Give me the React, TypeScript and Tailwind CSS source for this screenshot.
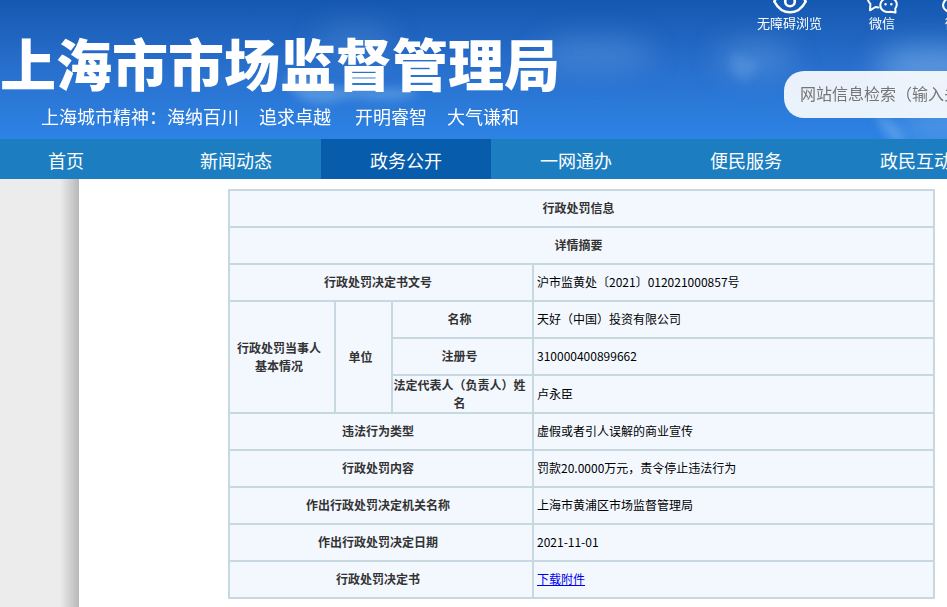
import type { ReactNode } from "react";

const navItems = ["首页", "新闻动态", "政务公开", "一网通办", "便民服务", "政民互动"];

function Th({
  children,
  colSpan,
  rowSpan,
  multiline = false,
}: {
  children: ReactNode;
  colSpan?: number;
  rowSpan?: number;
  multiline?: boolean;
}) {
  return (
    <th
      colSpan={colSpan}
      rowSpan={rowSpan}
      className={`h-[37px] border-2 border-[#c7d8e1] pr-[6px] pl-0 text-center font-bold text-[#333] ${multiline ? "pb-0" : "pb-px"}`}
    >
      {children}
    </th>
  );
}

function Td({ children }: { children: ReactNode }) {
  return <td className="h-[37px] border-2 border-[#c7d8e1] pb-px pl-[3px] text-black">{children}</td>;
}

function EyeIcon() {
  return (
    <svg viewBox="0 0 34 32" className="h-8 w-[34px]" fill="none" stroke="white" strokeWidth="2.6">
      <path d="M1.300 15.500C5 8 11 4.500 17 4.500s12 3.500 15.700 11C29 22.500 23 26.300 17 26.300S5 22.500 1.300 15.500Z" />
      <circle cx="17" cy="15.500" r="4.800" />
    </svg>
  );
}

function WechatIcon() {
  return (
    <svg viewBox="0 0 32 32" className="size-8" fill="none" stroke="white" strokeWidth="2" strokeLinecap="round" strokeLinejoin="round">
      <path d="M12.500 21.500 9.500 21 4 24.300l.4-6.300C-1 12 2 4 12 3.500c6 0 10 3.500 11 8" />
      <path d="M29.300 22.500c2.800-3.800 1.700-9.500-5-10.500-6-.5-10 3-10 7 0 5 4.500 7.800 10 6.800l5.200.8Z" />
      <path d="M19.500 18.200h.1M25.300 18.200h.1" strokeWidth="2.400" />
    </svg>
  );
}

function WeiboIcon() {
  return (
    <svg viewBox="0 0 32 32" className="size-8" fill="none" stroke="white" strokeWidth="2">
      <ellipse cx="12.500" cy="19" rx="11.500" ry="8" />
      <circle cx="12" cy="19" r="3.500" />
      <path d="M21 5c6-1 9 4 8 9" />
    </svg>
  );
}

function Clouds() {
  return (
    <svg className="absolute inset-0 h-full w-full" viewBox="0 0 947 139" preserveAspectRatio="none" aria-hidden="true">
      <defs>
        <filter id="haze" x="-60%" y="-100%" width="220%" height="300%">
          <feGaussianBlur stdDeviation="14" />
        </filter>
        <filter id="wisp" x="-50%" y="-50%" width="200%" height="200%">
          <feGaussianBlur stdDeviation="5" />
        </filter>
      </defs>
      <g fill="#8fc0f2" filter="url(#haze)">
        <ellipse cx="355" cy="40" rx="40" ry="16" opacity=".2" />
        <ellipse cx="595" cy="54" rx="60" ry="16" opacity=".26" />
        <ellipse cx="755" cy="58" rx="40" ry="18" opacity=".26" />
        <ellipse cx="930" cy="66" rx="55" ry="20" opacity=".5" />
        <ellipse cx="940" cy="125" rx="42" ry="14" opacity=".4" />
      </g>
      <g fill="#8fc0f2" filter="url(#wisp)">
        <path d="M284 80c20-8 30 6 60 8s50-2 76 4c-20 14-55 4-76 6-14 6-32 8-46-2Z" opacity=".4" />
        <path d="M730 56c10-4 22 4 30 8l-14 18-14-8Z" opacity=".22" />
        <path d="M874 116l14 2 12 12 6 12h-14Z" opacity=".4" />
      </g>
    </svg>
  );
}

export default function App() {
  return (
    <div className="flex min-h-screen flex-col overflow-hidden bg-white font-['Noto_Sans_CJK_SC',sans-serif]">
      <header className="relative flex h-[139px] overflow-hidden bg-linear-to-b from-[#1558b1] via-[#2970cd] to-[#2d83e5]">
        <Clouds />
        <div className="relative w-[757px] shrink-0 pt-7 text-white">
          <h1 className="text-[56px] leading-[68px] font-black whitespace-nowrap">上海市市场监督管理局</h1>
          <p className="flex pt-[7px] pl-[41px] text-[18px] leading-[26px] whitespace-nowrap">
            <span className="mr-5">上海城市精神：海纳百川</span>
            <span className="mr-6">追求卓越</span>
            <span className="mr-5">开明睿智</span>
            <span>大气谦和</span>
          </p>
        </div>
        <div className="relative shrink-0">
          <div className="-mt-[14px] flex gap-11 text-[13px] leading-[18px] text-white">
            <a href="#accessible" className="flex flex-col items-center"><EyeIcon /><span className="-mt-1">无障碍浏览</span></a>
            <a href="#wechat" className="flex flex-col items-center"><WechatIcon /><span className="-mt-1">微信</span></a>
            <a href="#weibo" className="flex flex-col items-center"><WeiboIcon /><span className="-mt-1">微博</span></a>
          </div>
          <input
            type="search"
            aria-label="网站信息检索"
            placeholder="网站信息检索（输入关键词）"
            className="mt-[39px] ml-[27px] h-[47px] w-[360px] rounded-[20px] bg-white/90 px-4 pb-[3px] text-[16px] text-[#767676] placeholder:text-[#767676]"
          />
        </div>
      </header>
      <nav className="overflow-hidden bg-[#1c7ec1]">
        <ul className="-ml-[19px] flex">
          {navItems.map((item) => (
            <li key={item} className="w-[170px] shrink-0">
              <a
                href="#nav"
                className={`block h-10 text-center text-[18px] leading-[42px] text-white ${item === "政务公开" ? "bg-[#075cab]" : ""}`}
              >
                {item}
              </a>
            </li>
          ))}
        </ul>
      </nav>
      <div className="flex flex-1">
        <aside className="flex w-[79px] shrink-0 justify-end bg-[#ececec]">
          <div className="w-[19px] bg-linear-to-r from-[#ececec] to-[#b8b8b8]" />
        </aside>
        <main className="flex-1 pt-[10px] pr-3 pb-2 pl-[149px]">
          <table className="w-full table-fixed border-collapse bg-[#f3f8ff] text-[12px] leading-[18px]">
            <colgroup>
              <col className="w-[106px]" />
              <col className="w-[57px]" />
              <col className="w-[141px]" />
              <col />
            </colgroup>
            <tbody>
              <tr><Th colSpan={4}>行政处罚信息</Th></tr>
              <tr><Th colSpan={4}>详情摘要</Th></tr>
              <tr><Th colSpan={3}>行政处罚决定书文号</Th><Td>沪市监黄处〔2021〕012021000857号</Td></tr>
              <tr>
                <Th rowSpan={3} multiline>行政处罚当事人<br />基本情况</Th>
                <Th rowSpan={3} multiline>单位</Th>
                <Th>名称</Th>
                <Td>天好（中国）投资有限公司</Td>
              </tr>
              <tr><Th>注册号</Th><Td>310000400899662</Td></tr>
              <tr><Th multiline>法定代表人（负责人）姓名</Th><Td>卢永臣</Td></tr>
              <tr><Th colSpan={3}>违法行为类型</Th><Td>虚假或者引人误解的商业宣传</Td></tr>
              <tr><Th colSpan={3}>行政处罚内容</Th><Td>罚款20.0000万元，责令停止违法行为</Td></tr>
              <tr><Th colSpan={3}>作出行政处罚决定机关名称</Th><Td>上海市黄浦区市场监督管理局</Td></tr>
              <tr><Th colSpan={3}>作出行政处罚决定日期</Th><Td>2021-11-01</Td></tr>
              <tr><Th colSpan={3}>行政处罚决定书</Th><Td><a href="#download" className="text-[#0000ee] underline">下载附件</a></Td></tr>
            </tbody>
          </table>
        </main>
      </div>
    </div>
  );
}
